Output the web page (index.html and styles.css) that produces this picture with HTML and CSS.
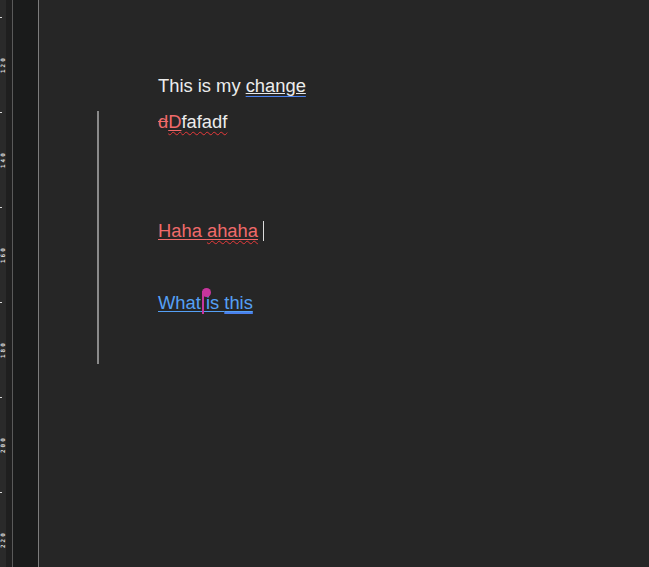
FILE: index.html
```html
<!DOCTYPE html>
<html>
<head>
<meta charset="utf-8">
<link rel="stylesheet" href="styles.css">
</head>
<body>
<div class="app">
  <div class="ruler">
    <div class="seg"><div class="tick"></div><div class="label">120</div></div>
    <div class="seg"><div class="tick"></div><div class="label">140</div></div>
    <div class="seg"><div class="tick"></div><div class="label">160</div></div>
    <div class="seg"><div class="tick"></div><div class="label">180</div></div>
    <div class="seg"><div class="tick"></div><div class="label">200</div></div>
    <div class="seg"><div class="tick"></div><div class="label">220</div></div>
  </div>
  <div class="gutter"></div>
  <div class="sep sep-dark"></div>
  <div class="panel"></div>
  <div class="sep sep-light"></div>
  <div class="editor">
    <div class="line">This is my <span class="comment"><span class="mark-white">change</span></span></div>
    <div class="changed">
      <div class="line first"><span class="del-red">d</span><span class="spell"><span class="ins-red">D</span>fafadf</span></div>
      <div class="line"></div>
      <div class="line"></div>
      <div class="line"><span class="ins-red">Haha <span class="spell">ahaha</span></span> <span class="caret"></span></div>
      <div class="line"></div>
      <div class="line"><span class="ins-blue">What<span class="remote"><span class="remote-bar"></span><span class="remote-dot"></span></span> is <span class="comment-blue">this</span></span></div>
    </div>
  </div>
</div>
</body>
</html>
```

FILE: styles.css
```css
html, body {
  margin: 0;
  padding: 0;
  height: 100%;
  background: #262626;
}

.app {
  display: flex;
  height: 567px;
  overflow: hidden;
}

.ruler {
  width: 6px;
  flex: none;
  background: #2a2a2a;
  overflow: hidden;
  display: flex;
  flex-direction: column;
  padding-top: 17px;
}

.seg {
  height: 95px;
  flex: none;
  display: flex;
  flex-direction: column;
}

.tick {
  width: 2px;
  height: 1px;
  background: #d8d8d8;
  flex: none;
}

.label {
  flex: 1;
  display: flex;
  align-items: center;
  justify-content: center;
  writing-mode: vertical-rl;
  transform: rotate(180deg);
  font: bold 6px "DejaVu Sans Mono", monospace;
  letter-spacing: 2px;
  color: #d8d8d8;
  width: 6px;
  line-height: 6px;
}

.gutter {
  width: 6px;
  flex: none;
  background: #1f1f1f;
}

.sep {
  width: 1px;
  flex: none;
}

.sep-dark {
  background: #5a5a5a;
}

.sep-light {
  background: #7c7c7c;
}

.panel {
  width: 25px;
  flex: none;
  background: #1a1b1b;
}

.editor {
  flex: 1;
  background: #262626;
  padding: 68px 0 0 119px;
  font-family: "Liberation Sans", Arial, sans-serif;
  font-size: 18.35px;
  color: #ececec;
}

.line {
  height: 36.2px;
  line-height: 36.2px;
  white-space: pre;
}

.changed {
  display: flow-root;
  margin: 7px 0 0 -61px;
  padding: 0 0 43px 59px;
  border-left: 2px solid #8a8a8a;
}

.line.first {
  margin-top: -7px;
}

.comment {
  text-decoration: underline #4a80ec;
  text-underline-offset: 4px;
}

.mark-white {
  text-decoration: underline #e8e8e8;
  text-underline-offset: 1px;
}

.del-red {
  color: #f06a6a;
  text-decoration: line-through #f06a6a;
}

.ins-red {
  color: #f06a6a;
  text-decoration: underline #f06a6a;
  text-underline-offset: 2px;
}

.spell {
  text-decoration: underline wavy #e83a3a;
  text-decoration-thickness: 1px;
  text-underline-offset: 3px;
}

.caret {
  display: inline-block;
  width: 1px;
  height: 20px;
  background: #dcdcdc;
  vertical-align: -4px;
}

.ins-blue {
  color: #55a0f5;
  text-decoration: underline #55a0f5;
  text-underline-offset: 2px;
}

.comment-blue {
  text-decoration: underline #4a80ec;
  text-decoration-thickness: 2px;
  text-underline-offset: 3px;
}

.remote {
  position: relative;
  display: inline-block;
  width: 0;
  height: 20px;
  vertical-align: top;
}

.remote-bar {
  position: absolute;
  left: 1px;
  top: 6px;
  width: 2px;
  height: 23px;
  background: #c8359e;
}

.remote-dot {
  position: absolute;
  left: 1px;
  top: 3px;
  width: 9px;
  height: 9px;
  border-radius: 50%;
  background: #c8359e;
}
```
